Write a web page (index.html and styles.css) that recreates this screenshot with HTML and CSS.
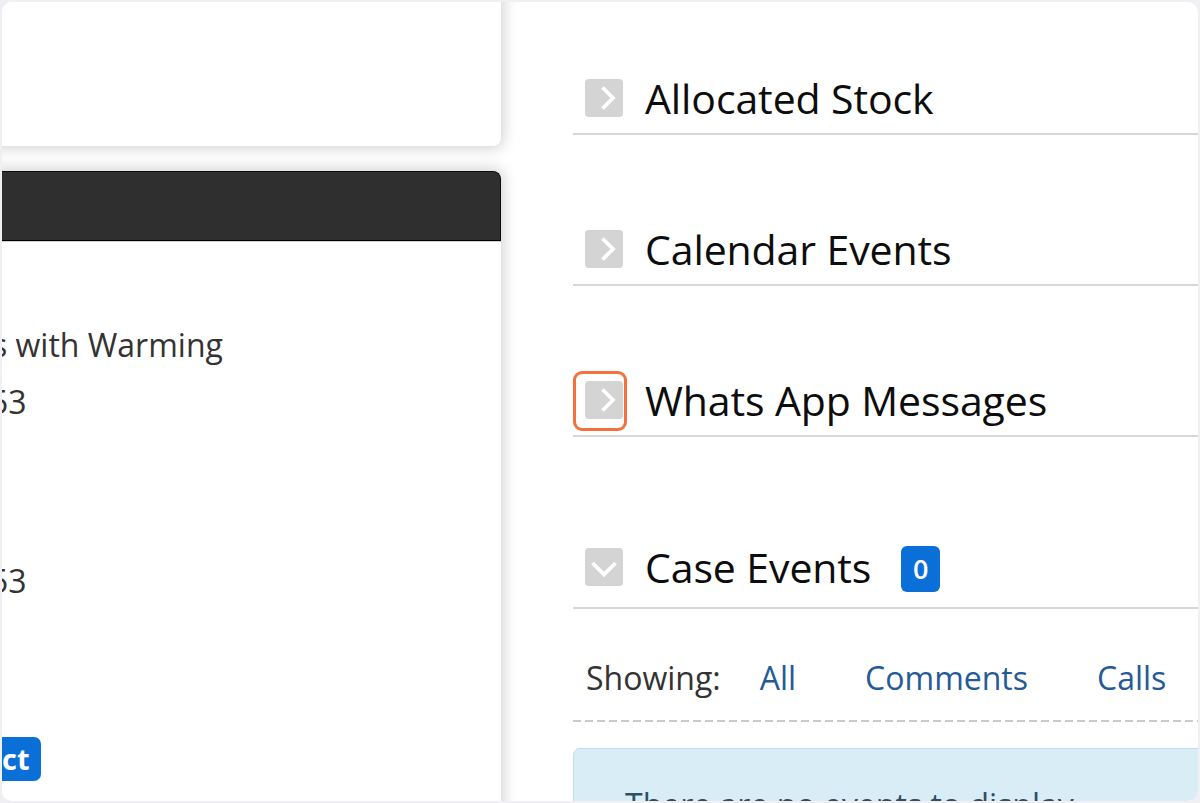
FILE: index.html
```html
<!DOCTYPE html>
<html lang="en">
<head>
<meta charset="utf-8">
<title>Case</title>
<link rel="stylesheet" href="styles.css">
</head>
<body>
<div class="frame">
  <aside class="left">
    <div class="card card-top"></div>
    <div class="card card-main">
      <div class="card-head"></div>
      <div class="card-body">
        <p class="field field-title">s with Warming</p>
        <p class="field field-num">53</p>
        <p class="field field-num field-gap">53</p>
        <a class="btn">ct</a>
      </div>
    </div>
  </aside>
  <main class="right">
    <section class="panel panel-first">
      <div class="panel-head">
        <span class="toggle"><svg viewBox="0 0 38 38" width="38" height="38"><polyline points="17.5,8.5 28,19 17.5,29.5" fill="none" stroke="#fff" stroke-width="3.8"/></svg></span>
        <h2 class="panel-title">Allocated Stock</h2>
      </div>
    </section>
    <section class="panel">
      <div class="panel-head">
        <span class="toggle"><svg viewBox="0 0 38 38" width="38" height="38"><polyline points="17.5,8.5 28,19 17.5,29.5" fill="none" stroke="#fff" stroke-width="3.8"/></svg></span>
        <h2 class="panel-title">Calendar Events</h2>
      </div>
    </section>
    <section class="panel">
      <div class="panel-head">
        <span class="toggle"><svg viewBox="0 0 38 38" width="38" height="38"><polyline points="17.5,8.5 28,19 17.5,29.5" fill="none" stroke="#fff" stroke-width="3.8"/></svg></span>
        <span class="highlight"></span>
        <h2 class="panel-title">Whats App Messages</h2>
      </div>
    </section>
    <section class="panel panel-open">
      <div class="panel-head">
        <span class="toggle"><svg viewBox="0 0 38 38" width="38" height="38"><polyline points="7.5,15 19,26.5 30.5,15" fill="none" stroke="#fff" stroke-width="3.8"/></svg></span>
        <h2 class="panel-title">Case Events</h2>
        <span class="badge">0</span>
      </div>
      <div class="filters">
        <span class="filters-label">Showing:</span>
        <a class="filter">All</a>
        <a class="filter">Comments</a>
        <a class="filter">Calls</a>
      </div>
      <div class="dashed"></div>
      <div class="info">There are no events to display</div>
    </section>
  </main>
</div>
</body>
</html>
```

FILE: styles.css
```css
html, body {
  margin: 0;
  padding: 0;
}
body {
  background: #efeff4;
  font-family: "Open Sans", "Noto Sans", sans-serif;
  color: #333;
}
.frame {
  margin: 2px;
  height: 799px;
  border-radius: 10px;
  background: #fff;
  overflow: hidden;
  display: flex;
}
.left {
  flex: none;
  width: 519px;
  margin-left: -20px;
  display: flex;
  flex-direction: column;
  gap: 25px;
}
.card {
  background: #fff;
  border-radius: 8px;
  box-shadow: 0 0 14px 3px rgba(0, 0, 0, 0.17);
}
.card-top {
  flex: none;
  height: 164px;
  margin-top: -20px;
}
.card-main {
  flex: none;
  height: 700px;
  display: flex;
  flex-direction: column;
}
.card-head {
  flex: none;
  height: 68px;
  background: #2f2f2f;
  border: 1px solid #0c0c0c;
  border-radius: 8px 8px 0 0;
  border-bottom-color: #000;
}
.card-body {
  border-top: 1px solid #cfcfcf;
  padding-left: 10px;
}
.field {
  margin: 0;
  font-size: 32px;
  line-height: 44px;
  white-space: nowrap;
  color: #333;
}
.field-title {
  margin-top: 81px;
}
.field-num {
  margin-top: 13px;
  margin-left: 7px;
  text-indent: -9px;
}
.field-gap {
  margin-top: 135px;
}
.btn {
  display: inline-block;
  margin-top: 134px;
  margin-left: 10px;
  height: 44px;
  line-height: 44px;
  padding: 0 11px 0 0;
  background: #0b6fd8;
  color: #fff;
  font-weight: 700;
  font-size: 29px;
  border-radius: 0 7px 7px 0;
}
.right {
  flex: none;
  width: 700px;
  margin-left: 72px;
}
.panel {
  margin-top: 90px;
}
.panel-first {
  margin-top: 72px;
}
.panel-open {
  margin-top: 106px;
}
.panel-head {
  position: relative;
  display: flex;
  align-items: center;
  height: 48px;
  padding: 0 0 11px 12px;
  border-bottom: 2px solid #d7d7d7;
}
.panel-open .panel-head {
  padding-bottom: 16px;
}
.toggle {
  flex: none;
  width: 38px;
  height: 38px;
  background: #d4d4d4;
  border-radius: 4px;
}
.toggle svg {
  display: block;
}
.highlight {
  position: absolute;
  left: 0;
  top: -5px;
  width: 54px;
  height: 60px;
  box-sizing: border-box;
  border: 3px solid #f5703f;
  border-radius: 9px;
}
.panel-title {
  margin: 0 0 0 22px;
  font-size: 41px;
  font-weight: 400;
  line-height: 48px;
  color: #0d0d0d;
  white-space: nowrap;
  letter-spacing: -0.1px;
}
.badge {
  margin-left: 30px;
  width: 39px;
  height: 46px;
  line-height: 46px;
  text-align: center;
  background: #0b6fd8;
  color: #fff;
  font-size: 27px;
  font-weight: 600;
  border-radius: 6px;
  margin-top: 4px;
}
.filters {
  display: flex;
  align-items: center;
  height: 44px;
  margin-top: 46px;
  padding: 0 0 21px 13px;
  font-size: 32px;
  white-space: nowrap;
}
.filters-label {
  color: #333;
  margin-right: 39px;
}
.filter {
  color: #255a98;
  margin-right: 69px;
}
.dashed {
  height: 2px;
  background: repeating-linear-gradient(to right, #cacaca 0 8px, transparent 8px 12px);
}
.info {
  margin-top: 26px;
  height: 200px;
  box-sizing: border-box;
  background: #d9edf7;
  border: 1px solid #bce0ef;
  border-radius: 7px;
  padding: 34px 0 0 51px;
  font-size: 32px;
  color: #2f4f63;
  white-space: nowrap;
}
```
